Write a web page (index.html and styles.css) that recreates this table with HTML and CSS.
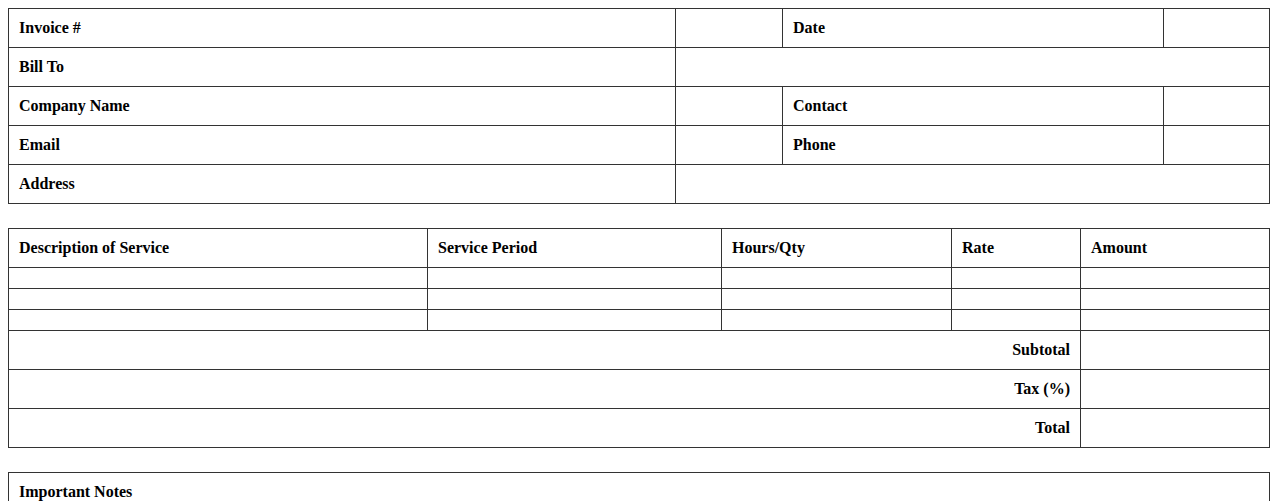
FILE: index.html
```html
<!DOCTYPE html>
<html>
<head>
<meta charset="utf-8">
<link rel="stylesheet" href="styles.css">
</head>
<body>
<table class="grid info">
  <colgroup><col class="c1"><col class="c2"><col class="c3"><col class="c4"></colgroup>
  <tr><th>Invoice #</th><td></td><th>Date</th><td></td></tr>
  <tr><th>Bill To</th><td colspan="3"></td></tr>
  <tr><th>Company Name</th><td></td><th>Contact</th><td></td></tr>
  <tr><th>Email</th><td></td><th>Phone</th><td></td></tr>
  <tr><th>Address</th><td colspan="3"></td></tr>
</table>

<table class="grid items">
  <colgroup><col class="d1"><col class="d2"><col class="d3"><col class="d4"><col class="d5"></colgroup>
  <tr><th>Description of Service</th><th>Service Period</th><th>Hours/Qty</th><th>Rate</th><th>Amount</th></tr>
  <tr class="empty"><td></td><td></td><td></td><td></td><td></td></tr>
  <tr class="empty"><td></td><td></td><td></td><td></td><td></td></tr>
  <tr class="empty"><td></td><td></td><td></td><td></td><td></td></tr>
  <tr><th colspan="4" class="right">Subtotal</th><td></td></tr>
  <tr><th colspan="4" class="right">Tax (%)</th><td></td></tr>
  <tr><th colspan="4" class="right">Total</th><td></td></tr>
</table>

<table class="grid notes">
  <tr><th>Important Notes</th></tr>
  <tr><td></td></tr>
</table>
</body>
</html>
```
FILE: styles.css
```css
body {
  margin: 8px;
  font-family: "Liberation Serif", "Times New Roman", serif;
  font-size: 16px;
  color: #000;
  background: #fff;
}
.grid {
  width: 100%;
  border-collapse: collapse;
  table-layout: fixed;
  margin-bottom: 24px;
}
.grid th, .grid td {
  border: 1px solid #333;
  padding: 10px;
  line-height: 18px;
  text-align: left;
  vertical-align: middle;
  font-weight: bold;
}
.grid .right { text-align: right; }
.grid tr.empty td { height: 0; line-height: 0; }
.info .c1 { width: 667px; }
.info .c2 { width: 107px; }
.info .c3 { width: 381px; }
.items .d1 { width: 419px; }
.items .d2 { width: 294px; }
.items .d3 { width: 230px; }
.items .d4 { width: 129px; }
```
